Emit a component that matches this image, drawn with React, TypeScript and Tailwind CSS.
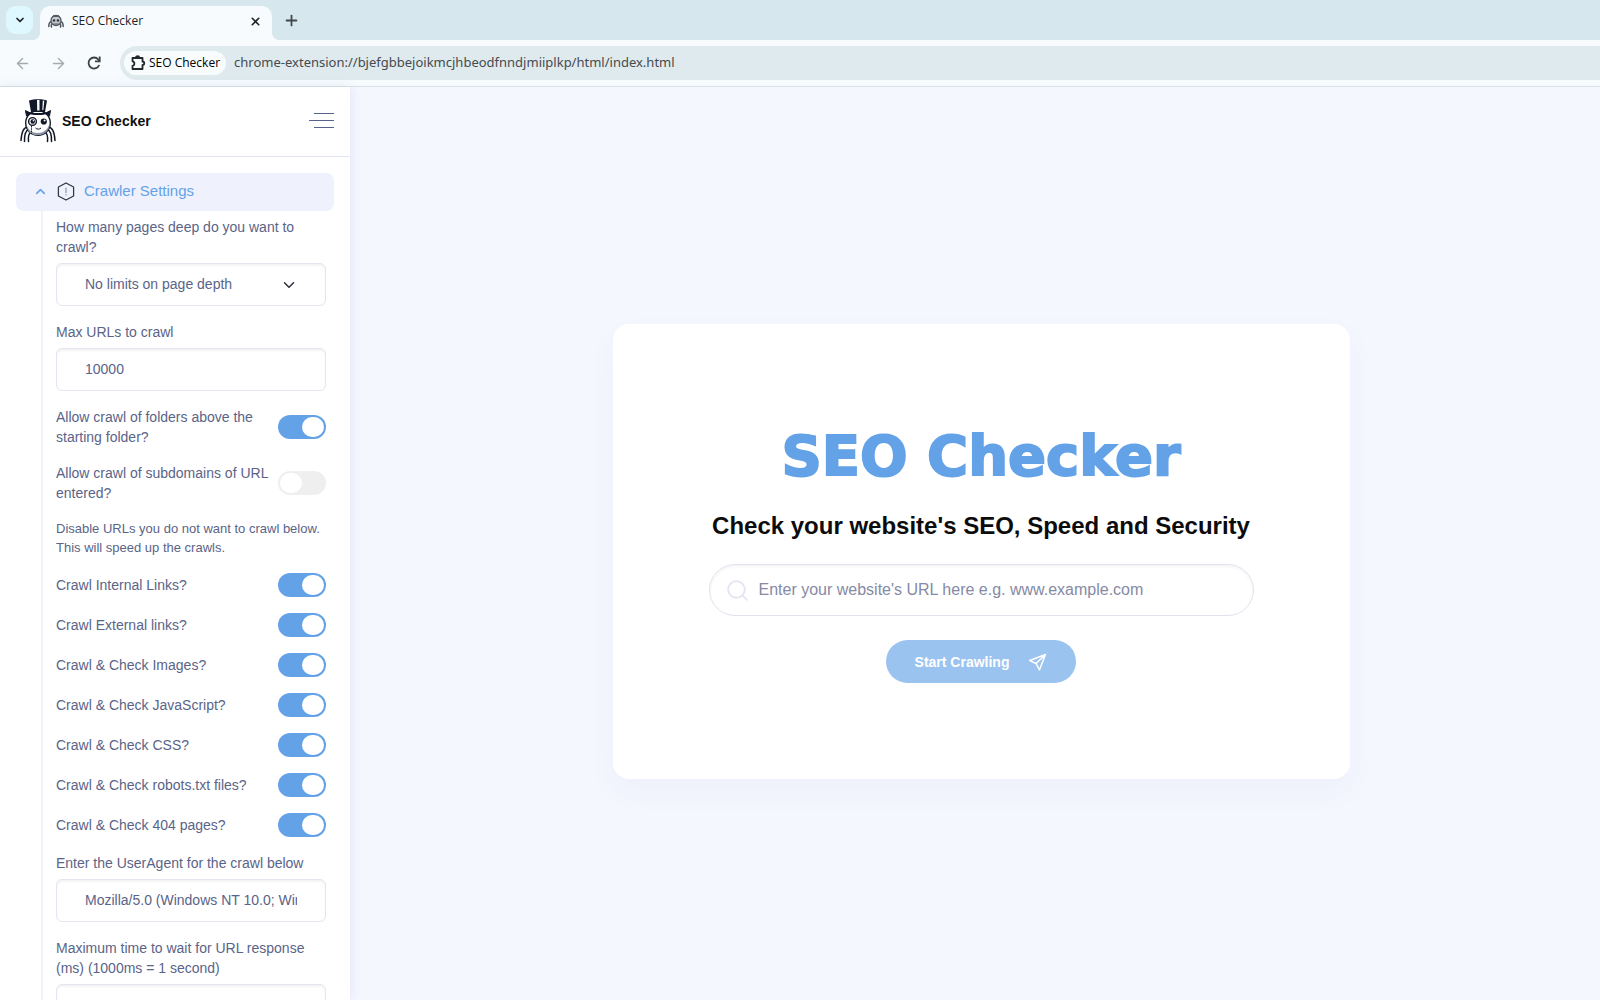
import React from "react";
import { ArrowLeft, ArrowRight, ChevronDown, ChevronUp, Plus, Search, X } from "lucide-react";

function SpiderLogo({ className }: { className: string }) {
  return (
    <svg viewBox="0 0 36 44" className={className} fill="none" aria-hidden="true">
      <g stroke="#111827" strokeWidth="1.500" strokeLinecap="round">
        <path d="M8 28C3 28 1.500 34 1 41.500M9 30C5 32 4.500 36 4.500 42.500M11 33C8 35 8 38 8.500 42.500" />
        <path d="M28 28C33 28 34.500 34 35 41.500M27 30C31 32 31.500 36 31.500 42.500M25 33C28 35 28 38 27.500 42.500" />
      </g>
      <circle cx="18" cy="24" r="12.300" fill="#fff" stroke="#111827" strokeWidth="1.400" />
      <path d="M6.500 26C7 33 12 37 19 36C25 35.500 30 31 29.500 25C27.500 31 23 34 18 34C12 34 8.500 31 6.500 26Z" fill="#8d95a3" />
      <path d="M5.500 11.500L6.500 17L10.500 14.500ZM30.500 11.500L29.500 17L25.500 14.500Z" fill="#111827" stroke="#111827" strokeLinejoin="round" />
      <path d="M9 1.500C14 -.2 22 -.2 27 1.500L25 13H11Z" fill="#111827" />
      <path d="M17 1L19.500 1V11.500H17.200ZM22.800 1.500L24.300 1.700L23.300 11H22.300Z" fill="#fff" />
      <path d="M6.500 12.800C12 15.800 24 15.800 29.500 12.800" stroke="#111827" strokeWidth="2" />
      <circle cx="12.500" cy="22.500" r="3.900" fill="#e5e7eb" stroke="#111827" strokeWidth="1.400" />
      <circle cx="12.800" cy="22.500" r="2.200" fill="#111827" />
      <circle cx="23.800" cy="22.500" r="3.100" fill="#111827" />
      <circle cx="24.600" cy="21.400" r="1" fill="#fff" />
      <circle cx="13.400" cy="21.700" r=".8" fill="#fff" />
      <path d="M15.500 29C17 30.500 19.500 30.500 21 29" stroke="#111827" />
      <path d="M11.500 27V35" stroke="#111827" strokeDasharray="1.500 .8" />
    </svg>
  );
}

function TabIcon() {
  return (
    <svg viewBox="0 0 16 16" className="size-4" fill="none" aria-hidden="true">
      <path d="M3.500 8.500C1.500 9 .8 11 .8 13.500M4.500 10.500C3 11.500 3 12.500 3.500 14M12.500 8.500C14.500 9 15.200 11 15.200 13.500M11.500 10.500C13 11.500 13 12.500 12.500 14" stroke="#50565c" strokeWidth="1.500" strokeLinecap="round" />
      <circle cx="8" cy="7.500" r="5" fill="#c5cbd0" stroke="#555b61" strokeWidth="1.300" />
      <path d="M4 4L5.500 2H10.500L12 4Z" fill="#555b61" />
      <circle cx="6" cy="7.500" r="1.300" fill="#33383d" />
      <circle cx="10" cy="7.500" r="1.300" fill="#33383d" />
      <path d="M5.500 11H10.500" stroke="#50565c" />
    </svg>
  );
}

function BrowserChrome() {
  return (
    <header className="shrink-0 border-b border-[#d9e2e7] bg-[#f7fbfd] font-['Open_Sans',sans-serif] text-[#1f2427]">
      <div className="bg-[#d6e7ed]">
        <div className="flex h-10 items-start gap-[7px] pl-[6px]">
          <button aria-label="Search tabs" className="mt-[6px] flex h-7 w-[27px] items-center justify-center rounded-[9px] bg-[#dff7ff]">
            <ChevronDown size={12} strokeWidth={3.5} />
          </button>
          <div className="relative mt-[6px] flex h-[34px] w-[232px] items-center rounded-t-[10px] bg-[#f7fbfd] pr-[10px] pl-2">
            <span className="absolute bottom-0 -left-2 size-2 bg-[radial-gradient(circle_at_0_0,transparent_8px,#f7fbfd_8px)]" />
            <span className="absolute -right-2 bottom-0 size-2 bg-[radial-gradient(circle_at_100%_0,transparent_8px,#f7fbfd_8px)]" />
            <div className="mb-1 flex flex-1 items-center gap-2">
              <TabIcon />
              <span className="flex-1 text-xs">SEO Checker</span>
              <button aria-label="Close tab">
                <X size={13} strokeWidth={3} />
              </button>
            </div>
          </div>
          <button aria-label="New tab" className="mt-[12px] ml-1">
            <Plus size={17} strokeWidth={2.5} className="text-[#41484c]" />
          </button>
        </div>
      </div>
      <div className="flex h-[46px] items-center pl-[14px]">
        <button aria-label="Back" className="text-[#a5abae]">
          <ArrowLeft size={17} strokeWidth={2} />
        </button>
        <button aria-label="Forward" className="ml-[19px] text-[#a5abae]">
          <ArrowRight size={17} strokeWidth={2} />
        </button>
        <button aria-label="Reload" className="ml-[18px]">
          <svg viewBox="0 0 18 18" className="size-[18px]" fill="none" stroke="#3c4347" strokeWidth="1.800">
            <path d="M14.200 11A5.500 5.500 0 1 1 13.300 5.500L14.500 7" />
            <path d="M14.700 2.500V7.300H10" />
          </svg>
        </button>
        <div className="ml-[17px] flex h-[34px] flex-1 items-center rounded-l-full bg-[#dfeaee] pl-1">
          <button className="flex h-6 items-center gap-[3px] rounded-full bg-[#f8fcfd] pr-[6px] pl-[6px] text-xs font-medium text-black">
            <svg viewBox="0 0 16 16" className="size-4" fill="none" stroke="#22282b" strokeWidth="1.800" strokeLinejoin="round">
              <path d="M2.500 3H12.500V6.500C14.800 6.500 14.800 10 12.500 10V14H2.500V10.800C5 10.500 5 6.600 2.500 6.300Z" />
              <path d="M6 2.500C6 .8 9.200 .8 9.200 2.500" />
            </svg>
            SEO Checker
          </button>
          <input
            aria-label="Address"
            defaultValue="chrome-extension://bjefgbbejoikmcjhbeodfnndjmiiplkp/html/index.html"
            className="ml-2 min-w-0 flex-1 bg-transparent font-['Noto_Sans',sans-serif] text-[13px] text-[#454b4e] outline-none"
          />
        </div>
      </div>
    </header>
  );
}

const fieldClass =
  "h-[43px] w-full rounded-md border border-[#e3e5f0] bg-white px-7 pb-[2px] text-sm text-[#5a6488] shadow-[inset_0_2px_2px_rgba(60,60,110,0.06)] outline-none";

function Field({ id, label, children }: { id: string; label: string; children: React.ReactNode }) {
  return (
    <div className="flex flex-col gap-[6px]">
      <label htmlFor={id}>{label}</label>
      {children}
    </div>
  );
}

function Toggle({ id, label, on = true }: { id: string; label: string; on?: boolean }) {
  return (
    <div className="flex items-center justify-between">
      <label htmlFor={id} className="max-w-[220px]">
        {label}
      </label>
      <input
        id={id}
        type="checkbox"
        role="switch"
        defaultChecked={on}
        className="h-6 w-12 shrink-0 appearance-none rounded-full bg-[#efefef] p-[2px] before:block before:h-5 before:w-[22px] before:rounded-full before:bg-white before:content-[''] checked:bg-[#64a2e8] checked:before:ml-[22px]"
      />
    </div>
  );
}

const crawlToggles = [
  { id: "internal", label: "Crawl Internal Links?" },
  { id: "external", label: "Crawl External links?" },
  { id: "images", label: "Crawl & Check Images?" },
  { id: "javascript", label: "Crawl & Check JavaScript?" },
  { id: "css", label: "Crawl & Check CSS?" },
  { id: "robots", label: "Crawl & Check robots.txt files?" },
  { id: "missing", label: "Crawl & Check 404 pages?" },
];

function Sidebar() {
  return (
    <aside className="z-10 flex w-[350px] shrink-0 flex-col overflow-hidden bg-white shadow-[0_0_10px_rgba(80,90,180,0.12)]">
      <div className="flex h-[70px] shrink-0 items-center border-b border-[#e1e5ee] pr-4 pb-[2px] pl-5">
        <SpiderLogo className="h-11 w-9" />
        <span className="ml-[6px] flex-1 text-sm font-bold text-[#111]">SEO Checker</span>
        <button aria-label="Toggle menu" className="flex w-[25px] flex-col items-end gap-[6px]">
          <span className="h-px w-5 bg-[#54648c]" />
          <span className="h-px w-[25px] bg-[#54648c]" />
          <span className="h-px w-5 bg-[#54648c]" />
        </button>
      </div>
      <div className="px-4 pt-4">
        <button aria-expanded="true" className="flex h-[38px] w-full items-center rounded-lg bg-[#eff1fc] pb-px pl-[17px] text-[15px] text-[#64a2e8]">
          <ChevronUp size={15} strokeWidth={2.5} />
          <svg viewBox="0 0 18 20" className="ml-[9px] h-[19px] w-[18px]" fill="none" stroke="#303740" strokeWidth="1.300" strokeLinejoin="round">
            <path d="M9 1L17 5.300V14.700L9 19L1 14.700V5.300Z" />
            <path d="M9 6V11.500M9 13V14.300" stroke="#9198a3" />
          </svg>
          <span className="ml-[9px]">Crawler Settings</span>
        </button>
        <div className="ml-[25px] flex w-[285px] flex-col gap-4 border-l-2 border-[#f0f2f9] pt-[6px] pl-[13px] text-sm/5 text-[#5a6488]">
          <Field id="depth" label="How many pages deep do you want to crawl?">
            <div className="relative">
              <select id="depth" className={`${fieldClass} appearance-none`}>
                <option>No limits on page depth</option>
              </select>
              <ChevronDown size={18} strokeWidth={2} className="pointer-events-none absolute top-[13px] right-7 text-[#2c3038]" />
            </div>
          </Field>
          <Field id="max-urls" label="Max URLs to crawl">
            <input id="max-urls" defaultValue="10000" className={fieldClass} />
          </Field>
          <Toggle id="folders" label="Allow crawl of folders above the starting folder?" />
          <Toggle id="subdomains" label="Allow crawl of subdomains of URL entered?" on={false} />
          <p className="text-[13px]/[19px]">Disable URLs you do not want to crawl below. This will speed up the crawls.</p>
          {crawlToggles.map((t) => (
            <Toggle key={t.id} id={t.id} label={t.label} />
          ))}
          <Field id="agent" label="Enter the UserAgent for the crawl below">
            <input id="agent" defaultValue="Mozilla/5.0 (Windows NT 10.0; Win64; x64)" className={fieldClass} />
          </Field>
          <Field id="timeout" label="Maximum time to wait for URL response (ms) (1000ms = 1 second)">
            <input id="timeout" defaultValue="10000" className={fieldClass} />
          </Field>
        </div>
      </div>
    </aside>
  );
}

function CrawlCard() {
  return (
    <section className="flex w-full max-w-[737px] flex-col items-center rounded-2xl bg-white p-24 shadow-[0_12px_30px_rgba(80,70,160,0.04)]">
      <h1 className="font-['DejaVu_Sans',sans-serif] text-[56px]/[72px] font-black whitespace-nowrap text-[#64a2e8] [-webkit-text-stroke:2px_#64a2e8]">
        SEO Checker
      </h1>
      <h2 className="mt-4 text-2xl/9 font-bold text-[#0c0c0c]">Check your website's SEO, Speed and Security</h2>
      <form className="mt-5 flex w-full flex-col items-center gap-6" onSubmit={(e) => e.preventDefault()}>
        <label className="flex h-[52px] w-full items-center gap-[9px] rounded-full border border-[#e2e2ee] px-[15px] shadow-[inset_0_2px_3px_rgba(60,60,110,0.05)]">
          <Search size={25} strokeWidth={1.8} className="shrink-0 text-[#e4e5f0]" />
          <input
            aria-label="Website URL"
            placeholder="Enter your website's URL here e.g. www.example.com"
            className="min-w-0 flex-1 bg-transparent text-base outline-none placeholder:text-[#858aa5]"
          />
        </label>
        <button type="submit" className="flex h-[43px] w-[190px] items-center justify-center gap-5 rounded-full bg-[#9bc3f0] text-sm font-bold text-white">
          Start Crawling
          <svg viewBox="0 0 18 18" className="size-[18px]" fill="none" stroke="currentColor" strokeWidth="1.500" strokeLinejoin="round">
            <path d="M16.500 1.500L.8 7.500L7 10.500L10.500 16.800ZM16.500 1.500L7 10.500" />
          </svg>
        </button>
      </form>
    </section>
  );
}

export default function App() {
  return (
    <div className="flex h-screen flex-col overflow-hidden font-['Liberation_Sans',Arial,sans-serif]">
      <BrowserChrome />
      <div className="flex min-h-0 flex-1">
        <Sidebar />
        <main className="flex flex-1 items-center justify-center bg-[#f4f7fe] pt-4 pl-3">
          <CrawlCard />
        </main>
      </div>
    </div>
  );
}
